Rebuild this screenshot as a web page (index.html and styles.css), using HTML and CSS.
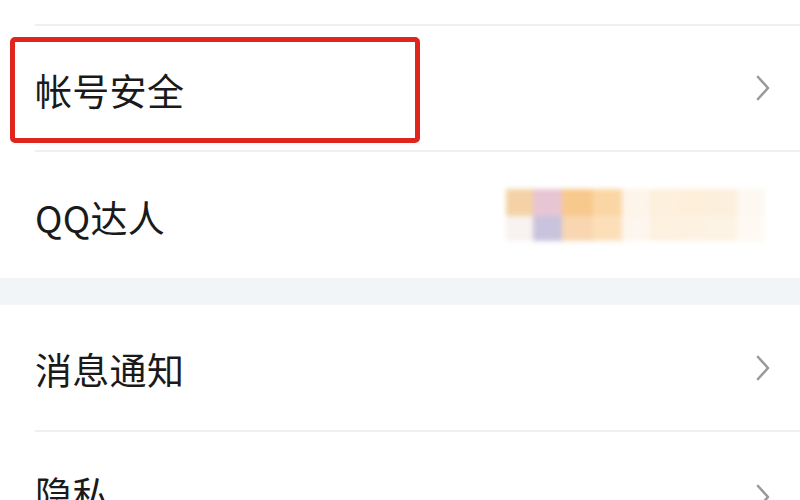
FILE: index.html
```html
<!DOCTYPE html>
<html lang="zh-CN">
<head>
<meta charset="utf-8">
<link rel="stylesheet" href="styles.css">
</head>
<body>
<div class="page">
  <div class="top-space"></div>
  <div class="row row-first">
    <span class="label">帐号安全</span>
    <svg class="chev" viewBox="0 0 16 28" width="16" height="28"><path d="M3 3 L13 14 L3 25" fill="none" stroke="#9a9a9a" stroke-width="2.6" stroke-linecap="round" stroke-linejoin="round"/></svg>
  </div>
  <div class="row row-second">
    <span class="label">QQ达人</span>
    <div class="mosaic">
      <i class="c1"></i><i class="c2"></i><i class="c3"></i><i class="c4"></i><i class="c5"></i><i class="c6"></i><i class="c7"></i><i class="c8"></i><i class="c9"></i>
      <i class="d1"></i><i class="d2"></i><i class="d3"></i><i class="d4"></i><i class="d5"></i><i class="d6"></i><i class="d7"></i><i class="d8"></i><i class="d9"></i>
    </div>
  </div>
  <div class="band"></div>
  <div class="row row-third">
    <span class="label">消息通知</span>
    <svg class="chev" viewBox="0 0 16 28" width="16" height="28"><path d="M3 3 L13 14 L3 25" fill="none" stroke="#9a9a9a" stroke-width="2.6" stroke-linecap="round" stroke-linejoin="round"/></svg>
  </div>
  <div class="row row-fourth">
    <span class="label">隐私</span>
    <svg class="chev" viewBox="0 0 16 28" width="16" height="28"><path d="M3 3 L13 14 L3 25" fill="none" stroke="#9a9a9a" stroke-width="2.6" stroke-linecap="round" stroke-linejoin="round"/></svg>
  </div>
  <div class="highlight"></div>
</div>
</body>
</html>
```
FILE: styles.css
```css
html, body {
  margin: 0;
  padding: 0;
  background: #ffffff;
  overflow: hidden;
}
.page {
  position: relative;
  width: 800px;
  height: 500px;
  overflow: hidden;
  font-family: "Noto Sans CJK SC", "Noto Sans", sans-serif;
  color: #1a1a1a;
}
.top-space {
  height: 24px;
}
.row {
  margin-left: 35px;
  padding-right: 30px;
  display: flex;
  align-items: center;
  justify-content: space-between;
  box-sizing: border-box;
  border-top: 2px solid #efefef;
}
.row-first { height: 126px; }
.row-second { height: 128px; }
.row-third { height: 125px; border-top: none; }
.row-fourth { height: 125px; align-items: flex-start; padding-top: 43px; }
.label {
  font-size: 37px;
  line-height: 1;
  letter-spacing: 0.3px;
  position: relative;
  top: 2px;
}
.row-fourth .label { top: 0; }
.chev {
  display: block;
  margin-right: -1px;
}
.row-fourth .chev { margin-top: 8px; }
.band {
  height: 27px;
  background: #f2f5f8;
}
.mosaic {
  display: grid;
  grid-template-columns: 27px 29px 31px 29px 28px 30px 28px 29px 28px;
  grid-template-rows: 27px 25px;
  filter: blur(2.5px);
  margin-right: 5px;
}
.mosaic i { display: block; }
.c1 { background: #f4d2a6; }
.c2 { background: #e8c5d3; }
.c3 { background: #f8c98c; }
.c4 { background: #fbd6a4; }
.c5 { background: #fdf4ea; }
.c6 { background: #fdf0dc; }
.c7 { background: #fdefda; }
.c8 { background: #fcefdc; }
.c9 { background: #fdf8f1; }
.d1 { background: #f8f3f1; }
.d2 { background: #c9c3dd; }
.d3 { background: #f9d6b1; }
.d4 { background: #fcdfb9; }
.d5 { background: #fdf6ee; }
.d6 { background: #fdf1e0; }
.d7 { background: #fdf2e2; }
.d8 { background: #fdf3e4; }
.d9 { background: #fef9f3; }
.highlight {
  position: absolute;
  left: 10px;
  top: 37px;
  width: 410px;
  height: 106px;
  box-sizing: border-box;
  border: 5px solid #e0261c;
  border-radius: 5px;
}
```
